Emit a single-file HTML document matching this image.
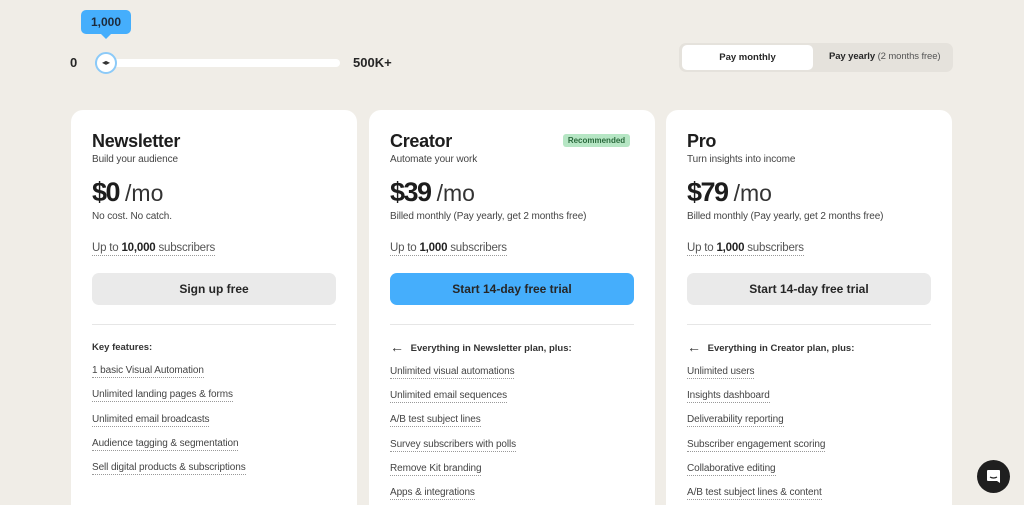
<!DOCTYPE html>
<html><head><style>
*{margin:0;padding:0;box-sizing:border-box}
html,body{width:1024px;height:505px;overflow:hidden}
body{background:#f0ede7;font-family:"Liberation Sans",sans-serif;color:#262626;position:relative}
.a{position:absolute;white-space:nowrap}
.card{position:absolute;top:110px;width:286px;height:420px;background:#fff;border-radius:12px}
.card .a{left:21px}
h2{font-size:18px;font-weight:700;color:#1d1d1d;letter-spacing:-0.3px}
.sub{font-size:10px;color:#444;letter-spacing:-0.1px}
.price{font-size:27px;font-weight:700;letter-spacing:-1.5px;color:#1d1d1d}
.price span{font-weight:400;font-size:23px;letter-spacing:0;color:#333}
.u{border-bottom:1px dotted #999;padding-bottom:1px}
.subs{font-size:11.5px;color:#555;letter-spacing:-0.2px}
.btn{left:21px;width:244px;height:32px;border-radius:7px;background:#eaeaea;font-size:12px;font-weight:700;text-align:center;line-height:32px;color:#262626}
.hr{left:21px;width:244px;height:1px;background:#e6e6e6}
.f{font-size:10px;color:#444;letter-spacing:-0.1px}
.k{font-size:9.5px;font-weight:700;color:#333}
.k b{font-size:14px;font-weight:400;margin-right:4px;vertical-align:-1px}
</style></head><body>
<div class="a" style="left:81px;top:10px;width:50px;height:24px;background:#45aefc;border-radius:5px;font-size:12px;font-weight:700;text-align:center;line-height:24px;color:#1d2a3a">1,000</div>
<div class="a" style="left:100px;top:33px;width:0;height:0;border-left:6px solid transparent;border-right:6px solid transparent;border-top:6px solid #45aefc"></div>
<div class="a" style="left:70px;top:55px;font-size:13px;font-weight:700">0</div>
<div class="a" style="left:95px;top:59px;width:245px;height:8px;background:#fff;border-radius:4px"></div>
<div class="a" style="left:95px;top:59px;width:12px;height:8px;background:#45aefc;border-radius:4px"></div>
<div class="a" style="left:95px;top:52px;width:22px;height:22px;border-radius:50%;background:#fff;border:2px solid #8ccaf8;font-size:8px;text-align:center;line-height:18px;color:#333">◂▸</div>
<div class="a" style="left:353px;top:55px;font-size:13px;font-weight:700">500K+</div>
<div class="a" style="left:679px;top:43px;width:274px;height:29px;background:#e5e2dc;border-radius:7px"></div>
<div class="a" style="left:682px;top:45px;width:131px;height:25px;background:#fff;border-radius:5px;font-size:9.5px;font-weight:700;text-align:center;line-height:25px">Pay monthly</div>
<div class="a" style="left:829px;top:51px;font-size:9.5px;font-weight:700;letter-spacing:-0.1px">Pay yearly <span style="font-weight:400;color:#555">(2 months free)</span></div>

<div class="card" style="left:71px">
<h2 class="a" style="top:21px">Newsletter</h2>
<div class="a sub" style="top:44px">Build your audience</div>
<div class="a price" style="top:67px">$0 <span>/mo</span></div>
<div class="a sub" style="top:101px">No cost. No catch.</div>
<div class="a subs" style="top:132px"><span class="u">Up to <b style="color:#222">10,000</b> subscribers</span></div>
<div class="a btn" style="top:163px">Sign up free</div>
<div class="a hr" style="top:214px"></div>
<div class="a k" style="top:232px">Key features:</div>
<div class="a f" style="top:255px"><span class="u">1 basic Visual Automation</span></div>
<div class="a f" style="top:279px"><span class="u">Unlimited landing pages &amp; forms</span></div>
<div class="a f" style="top:304px"><span class="u">Unlimited email broadcasts</span></div>
<div class="a f" style="top:328px"><span class="u">Audience tagging &amp; segmentation</span></div>
<div class="a f" style="top:352px"><span class="u">Sell digital products &amp; subscriptions</span></div>
</div>

<div class="card" style="left:369px">
<h2 class="a" style="top:21px">Creator</h2>
<div class="a" style="left:194px!important;top:24px;width:67px;height:13px;background:#b6e6c4;border-radius:3px;font-size:8px;font-weight:700;color:#2b6a3d;text-align:center;line-height:13px">Recommended</div>
<div class="a sub" style="top:44px">Automate your work</div>
<div class="a price" style="top:67px">$39 <span>/mo</span></div>
<div class="a sub" style="top:101px">Billed monthly (Pay yearly, get 2 months free)</div>
<div class="a subs" style="top:132px"><span class="u">Up to <b style="color:#222">1,000</b> subscribers</span></div>
<div class="a btn" style="top:163px;background:#45aefc">Start 14-day free trial</div>
<div class="a hr" style="top:214px"></div>
<div class="a k" style="top:229px"><b>←</b> Everything in Newsletter plan, plus:</div>
<div class="a f" style="top:256px"><span class="u">Unlimited visual automations</span></div>
<div class="a f" style="top:280px"><span class="u">Unlimited email sequences</span></div>
<div class="a f" style="top:304px"><span class="u">A/B test subject lines</span></div>
<div class="a f" style="top:329px"><span class="u">Survey subscribers with polls</span></div>
<div class="a f" style="top:353px"><span class="u">Remove Kit branding</span></div>
<div class="a f" style="top:377px"><span class="u">Apps &amp; integrations</span></div>
</div>

<div class="card" style="left:666px">
<h2 class="a" style="top:21px">Pro</h2>
<div class="a sub" style="top:44px">Turn insights into income</div>
<div class="a price" style="top:67px">$79 <span>/mo</span></div>
<div class="a sub" style="top:101px">Billed monthly (Pay yearly, get 2 months free)</div>
<div class="a subs" style="top:132px"><span class="u">Up to <b style="color:#222">1,000</b> subscribers</span></div>
<div class="a btn" style="top:163px">Start 14-day free trial</div>
<div class="a hr" style="top:214px"></div>
<div class="a k" style="top:229px"><b>←</b> Everything in Creator plan, plus:</div>
<div class="a f" style="top:256px"><span class="u">Unlimited users</span></div>
<div class="a f" style="top:280px"><span class="u">Insights dashboard</span></div>
<div class="a f" style="top:304px"><span class="u">Deliverability reporting</span></div>
<div class="a f" style="top:329px"><span class="u">Subscriber engagement scoring</span></div>
<div class="a f" style="top:353px"><span class="u">Collaborative editing</span></div>
<div class="a f" style="top:377px"><span class="u">A/B test subject lines &amp; content</span></div>
</div>

<div class="a" style="left:977px;top:460px;width:33px;height:33px;border-radius:50%;background:#1f1f1f">
<svg width="33" height="33" viewBox="0 0 33 33"><path d="M11 10h11a1 1 0 0 1 1 1v12l-3-2H11a1 1 0 0 1-1-1v-9a1 1 0 0 1 1-1z" fill="#fff"/><path d="M13 17q3.5 2 7 0" stroke="#1f1f1f" stroke-width="1.2" fill="none"/></svg>
</div>
</body></html>
